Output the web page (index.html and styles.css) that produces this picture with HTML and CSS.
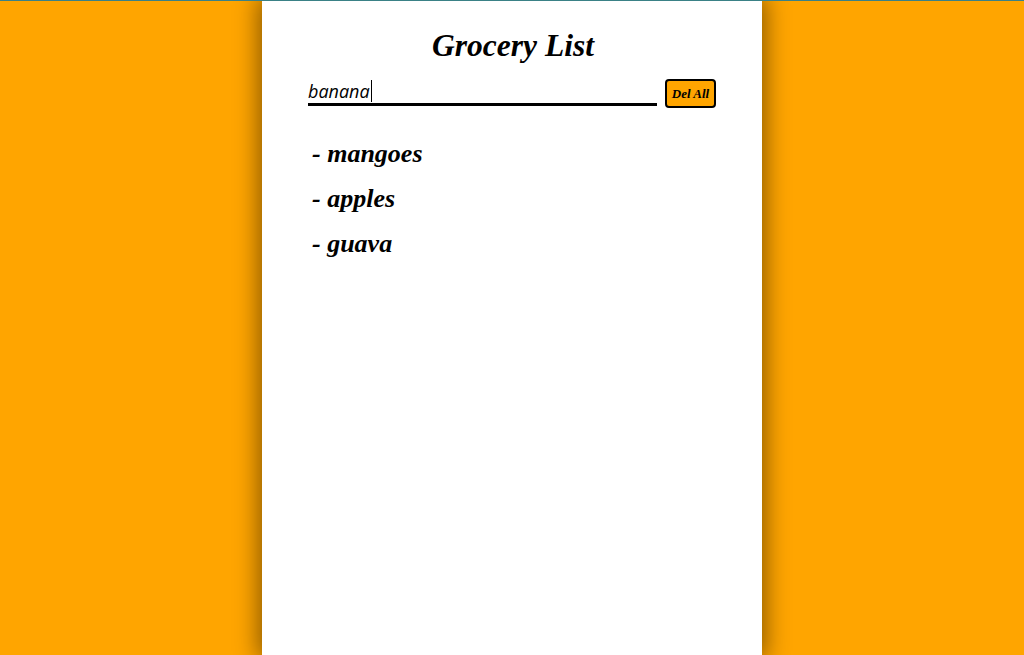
FILE: index.html
```html
<!DOCTYPE html>
<html>
<head>
<meta charset="utf-8">
<link rel="stylesheet" href="styles.css">
</head>
<body>
<div class="topline"></div>
<main class="panel">
  <h1 class="title">Grocery List</h1>
  <form class="entry">
    <div class="field"><span class="typed">banana</span><span class="caret"></span></div>
    <button type="button" class="delall">Del All</button>
  </form>
  <ul class="items">
    <li class="item">- mangoes</li>
    <li class="item">- apples</li>
    <li class="item">- guava</li>
  </ul>
</main>
</body>
</html>
```

FILE: styles.css
```css
html, body {
  margin: 0;
  height: 100%;
}
body {
  background: #ffa500;
  overflow: hidden;
  display: flex;
  flex-direction: column;
}
.topline {
  height: 1px;
  background: #3a8186;
  flex: none;
  position: relative;
  z-index: 2;
}
.panel {
  width: 500px;
  margin: 0 auto;
  flex: 1;
  background: #fff;
  box-shadow: 0 0 22px 4px rgba(0, 0, 0, 0.45);
  padding: 0 46px;
  box-sizing: border-box;
  font-family: "Liberation Serif", "Times New Roman", serif;
}
.title {
  margin: 26px 0 0;
  text-align: center;
  font-size: 31.5px;
  font-weight: bold;
  font-style: italic;
  line-height: 38px;
  padding-left: 2px;
}
.entry {
  display: flex;
  align-items: flex-start;
  margin-top: 14px;
}
.field {
  width: 349px;
  height: 24px;
  border-bottom: 3px solid #000;
  display: flex;
  align-items: flex-end;
  font-family: "Open Sans", "DejaVu Sans", sans-serif;
  font-style: italic;
  font-size: 18px;
  line-height: 24px;
}
.caret {
  width: 1px;
  height: 22px;
  margin-bottom: 1px;
  background: #000;
  margin-left: 1px;
}
.delall {
  margin-left: 8px;
  width: 51px;
  height: 29px;
  padding: 0;
  background: #ffa500;
  border: 2px solid #000;
  border-radius: 4px;
  font-family: "Liberation Serif", "Times New Roman", serif;
  font-weight: bold;
  font-style: italic;
  font-size: 13px;
  color: #000;
}
.items {
  list-style: none;
  margin: 31px 0 0;
  padding: 0 0 0 4px;
}
.item {
  font-size: 26px;
  font-weight: bold;
  font-style: italic;
  line-height: 29px;
  margin-bottom: 16px;
}
```
